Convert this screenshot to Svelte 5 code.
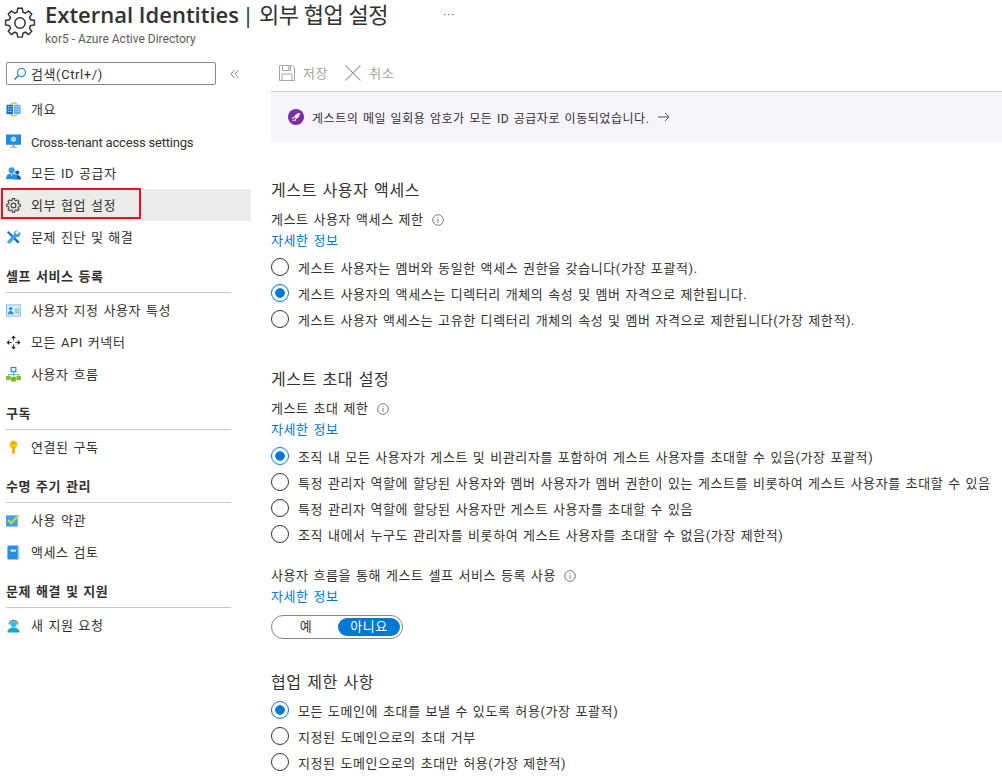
<script>
	const navTop = [
		{ icon: 'overview', label: '개요' },
		{ icon: 'monitor', label: 'Cross-tenant access settings', latin: true },
		{ icon: 'users', label: '모든 ID 공급자' },
		{ icon: 'gear', label: '외부 협업 설정', active: true },
		{ icon: 'tools', label: '문제 진단 및 해결' }
	];
	const navGroups = [
		{
			title: '셀프 서비스 등록',
			items: [
				{ icon: 'card', label: '사용자 지정 사용자 특성' },
				{ icon: 'arrows', label: '모든 API 커넥터' },
				{ icon: 'flow', label: '사용자 흐름' }
			]
		},
		{ title: '구독', items: [{ icon: 'key', label: '연결된 구독' }] },
		{
			title: '수명 주기 관리',
			items: [
				{ icon: 'check', label: '사용 약관' },
				{ icon: 'book', label: '액세스 검토' }
			]
		},
		{ title: '문제 해결 및 지원', items: [{ icon: 'support', label: '새 지원 요청' }] }
	];
	const accessOptions = [
		'게스트 사용자는 멤버와 동일한 액세스 권한을 갖습니다(가장 포괄적).',
		'게스트 사용자의 액세스는 디렉터리 개체의 속성 및 멤버 자격으로 제한됩니다.',
		'게스트 사용자 액세스는 고유한 디렉터리 개체의 속성 및 멤버 자격으로 제한됩니다(가장 제한적).'
	];
	const inviteOptions = [
		'조직 내 모든 사용자가 게스트 및 비관리자를 포함하여 게스트 사용자를 초대할 수 있음(가장 포괄적)',
		'특정 관리자 역할에 할당된 사용자와 멤버 사용자가 멤버 권한이 있는 게스트를 비롯하여 게스트 사용자를 초대할 수 있음',
		'특정 관리자 역할에 할당된 사용자만 게스트 사용자를 초대할 수 있음',
		'조직 내에서 누구도 관리자를 비롯하여 게스트 사용자를 초대할 수 없음(가장 제한적)'
	];
	const domainOptions = [
		'모든 도메인에 초대를 보낼 수 있도록 허용(가장 포괄적)',
		'지정된 도메인으로의 초대 거부',
		'지정된 도메인으로의 초대만 허용(가장 제한적)'
	];
	const gearPath =
		'M10.3 1h3.4l.5 2.9 1.8.8 2.4-1.700 2.400 2.400-1.700 2.400.8 1.800 2.900.5v3.400l-2.900.5-.8 1.800 1.700 2.400-2.400 2.400-2.400-1.700-1.800.8-.5 2.900h-3.400l-.5-2.900-1.800-.8-2.400 1.700-2.400-2.400 1.700-2.400-.8-1.800-2.900-.5v-3.400l2.900-.5.8-1.800-1.700-2.400 2.400-2.400 2.400 1.700 1.800-.8z';
</script>

{#snippet navIcon(name)}
	<svg class="nav-icon" viewBox="0 0 16 16" aria-hidden="true">
		{#if name === 'overview'}
			<path d="M4 3.500Q8 -1 12 2.500M4 12.500Q8 17 12 13.500" fill="none" stroke="#f2a23c" stroke-width="1.300" />
			<rect x="0.500" y="3" width="7" height="10" fill="#1773c4" />
			<rect x="8.500" y="3" width="7" height="10" fill="#63b1ea" />
			<path d="M2 5h1.500M4.500 5H6M2 7.500h1.500M4.500 7.500H6M2 10h1.500M4.500 10H6M10 5h1.500M12.500 5H14M10 7.500h1.500M12.500 7.500H14M10 10h1.500M12.500 10H14" stroke="#cfe8fa" stroke-width="1" />
		{:else if name === 'monitor'}
			<rect x="0" y="0.500" width="16" height="11" fill="#1e8ae6" />
			<path d="M8 2.500l2.800 1.500v3.200L8 8.800 5.200 7.200V4z" fill="#9fdcf7" />
			<rect x="7" y="11.500" width="2" height="2" fill="#8a8a8a" />
			<rect x="4.500" y="13.500" width="7" height="1.300" fill="#a8a8a8" />
		{:else if name === 'users'}
			<circle cx="12" cy="7" r="2.300" fill="#0f5ea8" />
			<path d="M9 14.500c0-3.500 1-5 3-5s4 1.500 4 5z" fill="#0f5ea8" />
			<circle cx="6" cy="4.500" r="3.300" fill="#3a9be6" />
			<path d="M0 14c0-4.500 2.500-6 6-6s6 1.500 6 6z" fill="#2490e0" />
			<path d="M5 8.500h2l-1 3z" fill="#cdeafb" />
		{:else if name === 'gear'}
			<svg x="0" y="0" width="16" height="16" viewBox="0 0 24 24">
				<path d={gearPath} fill="none" stroke="#444" stroke-width="1.800" />
				<circle cx="12" cy="12" r="3.800" fill="none" stroke="#444" stroke-width="1.800" />
			</svg>
		{:else if name === 'tools'}
			<path d="M1 2.500L2.500 1l12 11.500-2 2z" fill="#0f6cbd" />
			<path d="M15 1.500l-3 3-1.500-.5-.5-1.500 3-2C10 0 7.800 2 8.500 4.800L1 12.500 3.500 15l7.700-7.500C14 8.200 16 6 15 1.500z" fill="#3fa5e6" />
		{:else if name === 'card'}
			<rect x="0.500" y="2" width="15" height="12" fill="#d8eefa" stroke="#7cc0ea" />
			<circle cx="5" cy="6" r="1.800" fill="#2a8fdc" />
			<path d="M2 12c0-2.500 1.500-3.500 3-3.500s3 1 3 3.500z" fill="#2a8fdc" />
			<path d="M9.500 6.500h4.500M9.500 8.500h4.500M9.500 10.500h4.500" stroke="#7f9fb5" stroke-width="0.900" />
		{:else if name === 'arrows'}
			<path d="M8 3.500v2.500M8 10v2.500M3.500 8H6M10 8h2.500" stroke="#222" stroke-width="1" />
			<path d="M8 .5l2.600 3H5.400zM8 15.500l-2.600-3h5.200zM.5 8l3-2.600v5.200zM15.500 8l-3 2.600V5.400z" fill="#222" />
		{:else if name === 'flow'}
			<rect x="5.500" y="0.500" width="5" height="4.500" fill="#fff" stroke="#1e80d0" stroke-width="1.200" />
			<path d="M8 5v3M2.500 10V8h11v2M8 8v2" fill="none" stroke="#58b4e8" stroke-width="1" />
			<rect x="0" y="9.500" width="5" height="4.500" fill="#86bc25" />
			<rect x="5.500" y="10.500" width="5" height="5" fill="#76b31b" />
			<rect x="11" y="9.500" width="5" height="4.500" fill="#86bc25" />
		{:else if name === 'key'}
			<circle cx="8" cy="4.800" r="4.200" fill="#fcc419" />
			<path d="M6.500 8h3v5.500L8 15.500l-1.500-1.500z" fill="#f5ad00" />
			<circle cx="8" cy="3.300" r="1" fill="#b58300" />
		{:else if name === 'check'}
			<rect x="0" y="2.500" width="12.500" height="12" fill="#45a0e0" />
			<path d="M2.500 7.500l3 3.500L13.500 2.500" fill="none" stroke="#c3d94b" stroke-width="2.200" />
		{:else if name === 'book'}
			<rect x="1.500" y="0.500" width="12.500" height="15" rx="1.500" fill="#2690e6" />
			<rect x="12.500" y="1" width="1.500" height="14" fill="#a6d4f5" />
			<rect x="5" y="5" width="5.500" height="2" fill="#f0f8ff" />
		{:else if name === 'support'}
			<path d="M3.500 7a4.500 4.500 0 019 0" fill="none" stroke="#808080" stroke-width="1.500" />
			<circle cx="8" cy="6.500" r="3.300" fill="#25c2ef" />
			<path d="M1.500 15.500c0-4 3-5.500 6.500-5.500s6.500 1.500 6.500 5.500z" fill="#16a5d6" />
		{/if}
	</svg>
{/snippet}

{#snippet navRow(item)}
	<div class="nav-row" class:active={item.active} class:latin={item.latin}>
		{@render navIcon(item.icon)}
		<span>{item.label}</span>
	</div>
{/snippet}

{#snippet radios(options, selected)}
	<div class="radios">
		{#each options as text, i}
			<div class="radio-row">
				<span class="radio" class:on={i === selected}></span>
				<span>{text}</span>
			</div>
		{/each}
	</div>
{/snippet}

{#snippet label(text)}
	<div class="field-label">
		<span>{text}</span>
		<svg class="info" viewBox="0 0 12 12" aria-hidden="true">
			<circle cx="6" cy="6" r="5.300" fill="none" stroke="#7a7a7a" />
			<rect x="5.500" y="5" width="1" height="4" fill="#7a7a7a" />
			<rect x="5.500" y="3" width="1" height="1" fill="#7a7a7a" />
		</svg>
	</div>
	<div class="more">자세한 정보</div>
{/snippet}

<div class="page">
	<header class="blade-head">
		<svg class="head-gear" viewBox="0 0 24 24" aria-hidden="true">
			<path d={gearPath} fill="none" stroke="#333" stroke-width="1.100" />
			<circle cx="12" cy="12" r="3.900" fill="none" stroke="#333" stroke-width="1.100" />
		</svg>
		<div>
			<div class="title-line">
				<h1>
					<b>External Identities</b>
					<span class="sep">|</span>
					<span class="page-name">외부 협업 설정</span>
				</h1>
				<span class="dots">···</span>
			</div>
			<div class="subtitle">kor5 - Azure Active Directory</div>
		</div>
	</header>

	<div class="columns">
		<aside class="sidebar">
			<div class="search-line">
				<div class="search">
					<svg viewBox="0 0 14 14" aria-hidden="true">
						<circle cx="8.500" cy="5.500" r="4" fill="none" stroke="#0f78d4" stroke-width="1.100" />
						<path d="M5.500 8.500L1.500 12.500" stroke="#0f78d4" stroke-width="1.200" />
					</svg>
					<span>검색(Ctrl+/)</span>
				</div>
				<svg class="collapse" viewBox="0 0 10 10" aria-hidden="true">
					<path d="M4.500 1L1 5l3.500 4M8.500 1L5 5l3.500 4" fill="none" stroke="#8a8a8a" />
				</svg>
			</div>

			<nav>
				{#each navTop as item}
					{@render navRow(item)}
				{/each}
				{#each navGroups as group}
					<div class="group-title">{group.title}</div>
					{#each group.items as item}
						{@render navRow(item)}
					{/each}
				{/each}
			</nav>
		</aside>

		<main>
			<div class="toolbar">
				<div class="tool">
					<svg viewBox="0 0 16 16" aria-hidden="true">
						<path d="M.5.500h12.500l2.500 2.500v12.500H.5z" fill="none" stroke="#a6a6a6" />
						<path d="M3.500.500v5h8v-5M3 15.500V9h10v6.500" fill="none" stroke="#a6a6a6" />
						<rect x="9" y="1.500" width="1.500" height="3" fill="#a6a6a6" />
					</svg>
					<span>저장</span>
				</div>
				<div class="tool">
					<svg viewBox="0 0 16 16" aria-hidden="true">
						<path d="M.5.500l15 15M15.500.500l-15 15" stroke="#a6a6a6" stroke-width="1.100" />
					</svg>
					<span>취소</span>
				</div>
			</div>

			<div class="banner">
				<svg viewBox="0 0 16 16" aria-hidden="true">
					<circle cx="8" cy="8" r="8" fill="#7b2ea0" />
					<path d="M12 4C9 4 7 6 6 8l2 2c2-1 4-3 4-6zM6 8H4.500L4 9.500l1.500.3zM8 10v1.500L6.500 12l-.3-1.500zM5 10.500l-1 2 2-1z" fill="#fff" />
				</svg>
				<span>게스트의 메일 일회용 암호가 모든 ID 공급자로 이동되었습니다.</span>
				<svg class="arrow" viewBox="0 0 12 10" aria-hidden="true">
					<path d="M0 5h11M7 1l4 4-4 4" fill="none" stroke="#555" stroke-width="1" />
				</svg>
			</div>

			<section class="first">
				<h2>게스트 사용자 액세스</h2>
				{@render label('게스트 사용자 액세스 제한')}
				{@render radios(accessOptions, 1)}
			</section>

			<section>
				<h2>게스트 초대 설정</h2>
				{@render label('게스트 초대 제한')}
				{@render radios(inviteOptions, 0)}
				<div class="self-service">
					{@render label('사용자 흐름을 통해 게스트 셀프 서비스 등록 사용')}
				</div>
				<div class="toggle">
					<span>예</span>
					<span class="on">아니요</span>
				</div>
			</section>

			<section class="last">
				<h2>협업 제한 사항</h2>
				{@render radios(domainOptions, 0)}
			</section>
		</main>
	</div>
</div>

<style>
	:global(body) {
		overflow: hidden;
	}

	.page {
		width: 1002px;
		height: 776px;
		overflow: hidden;
		background: #fff;
		color: #323130;
		font-family: Roboto, 'Noto Sans CJK KR', sans-serif;
		font-size: 13px;
		letter-spacing: 0.6px;
		word-spacing: 1px;
	}

	.blade-head {
		display: flex;
		height: 52px;
		padding-left: 4px;
		gap: 9px;
	}

	.head-gear {
		width: 32px;
		height: 32px;
		margin-top: 7px;
		flex: none;
	}

	.title-line {
		display: flex;
		align-items: center;
		height: 29px;
	}

	h1 {
		display: flex;
		margin: 0;
		font-family: 'Open Sans', 'Noto Sans CJK KR', sans-serif;
		font-size: 22px;
		font-weight: 400;
		line-height: 29px;
		letter-spacing: 0;
		word-spacing: 0;
		white-space: nowrap;
	}

	h1 b {
		font-weight: 600;
	}

	.sep {
		margin-left: 3px;
	}

	.page-name {
		margin-left: 5px;
		letter-spacing: -0.5px;
	}

	.dots {
		margin-left: 55px;
		color: #666;
		font-size: 13px;
	}

	.subtitle {
		font-size: 12px;
		line-height: 16px;
		margin-top: 2px;
		color: #605e5c;
		letter-spacing: 0;
		word-spacing: 0;
	}

	.columns {
		display: flex;
	}

	.sidebar {
		width: 251px;
		flex: none;
	}

	.search-line {
		display: flex;
		align-items: center;
		padding: 10px 0 0 6px;
	}

	.search {
		box-sizing: border-box;
		display: flex;
		align-items: center;
		gap: 4px;
		width: 210px;
		height: 23px;
		padding-left: 6px;
		border: 1px solid #8a8886;
		border-radius: 2px;
	}

	.search svg {
		width: 14px;
		height: 14px;
	}

	.collapse {
		width: 10px;
		height: 10px;
		margin-left: 14px;
	}

	nav {
		margin-top: 8px;
	}

	.nav-row {
		display: flex;
		align-items: center;
		height: 32px;
		padding-left: 6px;
		gap: 10px;
		white-space: nowrap;
	}

	.nav-row span {
		position: relative;
		top: -0.5px;
	}

	.nav-row.latin {
		letter-spacing: -0.2px;
		word-spacing: 0;
	}

	.nav-row.latin span {
		top: 1px;
	}

	.nav-row.active {
		background: #edebe9;
		position: relative;
	}

	.nav-row.active::after {
		content: '';
		position: absolute;
		left: 1px;
		top: -1px;
		width: 136px;
		height: 27px;
		border: 2px solid #e81123;
	}

	.nav-icon {
		width: 15px;
		height: 15px;
		flex: none;
	}

	.group-title {
		box-sizing: border-box;
		height: 25px;
		margin: 15px 20px 1px 6px;
		border-bottom: 1px solid #c8c6c4;
		font-weight: 600;
		line-height: 18px;
	}

	main {
		flex: 1;
		min-width: 0;
		margin-left: 20px;
		margin-top: 8px;
	}

	.toolbar {
		display: flex;
		align-items: center;
		height: 25px;
		padding: 0 0 6px 8px;
		gap: 17px;
		border-bottom: 1px solid #d2d0ce;
		color: #a19f9d;
	}

	.tool {
		display: flex;
		align-items: center;
		gap: 8px;
	}

	.tool svg {
		width: 16px;
		height: 16px;
	}

	.banner {
		display: flex;
		align-items: center;
		height: 50px;
		padding-left: 17px;
		gap: 8px;
		background: #f7f3fa;
		font-size: 12px;
		letter-spacing: 0.55px;
	}

	.banner svg {
		width: 16px;
		height: 16px;
	}

	.banner svg.arrow {
		width: 12px;
		height: 10px;
		margin-left: 1px;
	}

	section {
		margin-top: 41px;
	}

	section.first {
		margin-top: 38px;
	}

	section.last {
		margin-top: 33px;
	}

	h2 {
		margin: 0 0 9px;
		font-size: 16px;
		font-weight: 400;
		line-height: 22px;
	}

	section.last h2 {
		margin-bottom: 7px;
	}

	.field-label {
		display: flex;
		align-items: center;
		gap: 8px;
		line-height: 18px;
	}

	.info {
		width: 12px;
		height: 12px;
	}

	.more {
		margin-top: 3px;
		line-height: 18px;
		color: #0078d4;
	}

	.radios {
		display: flex;
		flex-direction: column;
		gap: 8px;
		margin-top: 8px;
	}

	section.last .radios {
		margin-top: 0;
	}

	.radio-row {
		display: flex;
		align-items: center;
		gap: 9px;
		height: 18px;
		white-space: nowrap;
	}

	.radio {
		box-sizing: border-box;
		width: 18px;
		height: 18px;
		flex: none;
		border: 1px solid #323130;
		border-radius: 50%;
	}

	.radio.on {
		border-color: #0078d4;
		background: radial-gradient(circle, #0078d4 0 4.500px, #fff 5px);
	}

	.self-service {
		margin-top: 24px;
	}

	.toggle {
		box-sizing: border-box;
		display: flex;
		align-items: center;
		width: 132px;
		height: 24px;
		margin-top: 9px;
		padding: 2px;
		border: 1px solid #8a8886;
		border-radius: 12px;
	}

	.toggle span {
		flex: 1;
		text-align: center;
		line-height: 18px;
	}

	.toggle .on {
		flex: none;
		width: 62px;
		background: #0078d4;
		color: #fff;
		border-radius: 9px;
	}
</style>
